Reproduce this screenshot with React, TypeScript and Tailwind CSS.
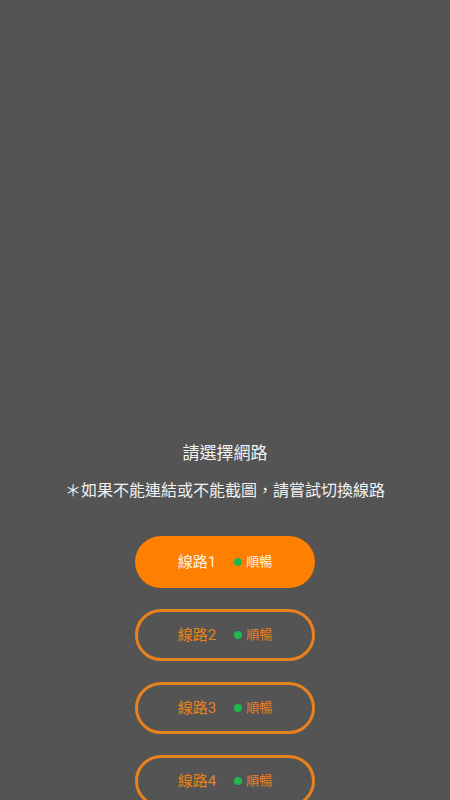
import React from "react";

const lines = [1, 2, 3, 4];

export default function App() {
  return (
    <div
      className="h-[800px] w-full overflow-hidden bg-[#545454] flex flex-col items-center pt-[440px]"
      style={{ fontFamily: 'Roboto, "Noto Sans CJK TC", "Noto Sans", sans-serif' }}
    >
      <div className="text-[17px] leading-[26px] text-[#f2f2f2]">請選擇網路</div>
      <div className="mt-[12px] text-[16px] leading-[26px] text-[#f2f2f2]">
        ＊如果不能連結或不能截圖，請嘗試切換線路
      </div>
      <div className="mt-[32px] flex flex-col gap-[21px]">
        {lines.map((n) => (
          <div
            key={n}
            className={
              n === 1
                ? "h-[52px] w-[180px] rounded-full bg-[#ff7f00] flex items-center justify-center"
                : "h-[52px] w-[180px] rounded-full border-[3px] border-[#e8821c] flex items-center justify-center"
            }
          >
            <span
              className={
                n === 1
                  ? "text-[15px] text-[#fff3e6] mr-[18px]"
                  : "text-[15px] text-[#e8821c] mr-[18px]"
              }
            >
              線路{n}
            </span>
            <span className="w-[8px] h-[8px] rounded-full bg-[#1fb84a] mr-[4px]" />
            <span
              className={
                n === 1 ? "text-[13px] text-[#fff3e6]" : "text-[13px] text-[#e8821c]"
              }
            >
              順暢
            </span>
          </div>
        ))}
      </div>
    </div>
  );
}
